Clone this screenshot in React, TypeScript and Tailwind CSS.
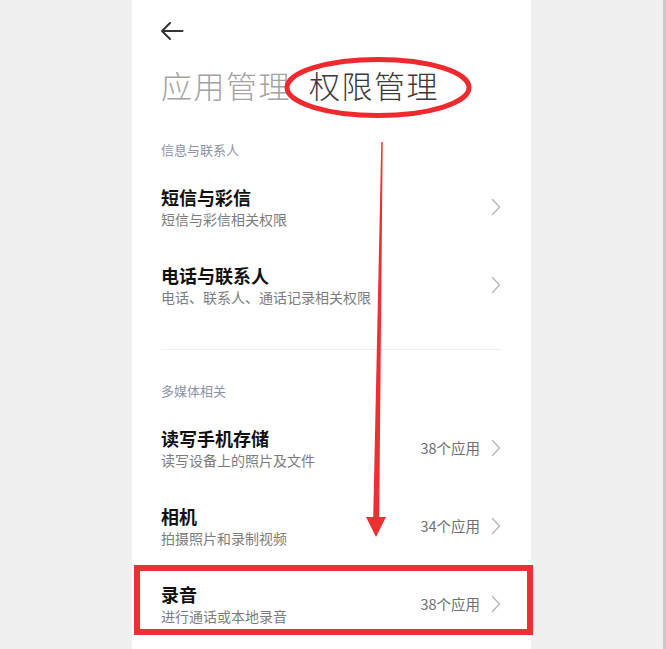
import React from 'react';

interface RowProps {
  title: string;
  desc: string;
  count?: string;
}

const Chevron = () => (
  <svg width="10" height="18" viewBox="0 0 10 18" fill="none" className="shrink-0">
    <path d="M1.5 1.5L8.5 9L1.5 16.5" stroke="#b8b8b8" strokeWidth="1.4" strokeLinecap="round" strokeLinejoin="round" />
  </svg>
);

const Row = ({ title, desc, count }: RowProps) => (
  <div className="flex items-center h-[78px]">
    <div className="flex-1 flex flex-col">
      <span className="text-[18px] leading-[24px] font-bold text-[#111]">{title}</span>
      <span className="text-[14px] leading-[20px] text-[#7d7d7d]">{desc}</span>
    </div>
    {count && <span className="text-[14.5px] text-[#6f6f6f] mr-[11px]">{count}</span>}
    <Chevron />
  </div>
);

const SectionLabel = ({ children }: { children: React.ReactNode }) => (
  <div className="text-[13px] leading-[20px] text-[#8c94a8]">{children}</div>
);

export default function App() {
  return (
    <div
      className="relative w-[666px] h-[649px] bg-[#f0f0f0] flex overflow-hidden"
      style={{ fontFamily: '"Noto Sans CJK SC", "Noto Sans", sans-serif' }}
    >
      <div className="w-[132px] shrink-0" />
      <div className="w-[399px] shrink-0 bg-white pl-[29px] pr-[30px] flex flex-col">
        <div className="mt-[19px] h-[24px] flex items-center">
          <svg width="24" height="20" viewBox="0 0 24 20" fill="none" className="-ml-[1px]">
            <path d="M22.5 10H2M10 2L2 10L10 18" stroke="#333" strokeWidth="2" strokeLinecap="round" strokeLinejoin="round" />
          </svg>
        </div>
        <div className="mt-[22px] h-[40px] flex items-center text-[31px] leading-[40px] tracking-[1.5px]">
          <span className="text-[#a3a3a3] font-light">应用管理</span>
          <span className="text-[#3a3a3a] font-light ml-[18px]">权限管理</span>
        </div>
        <div className="mt-[35px]">
          <SectionLabel>信息与联系人</SectionLabel>
        </div>
        <div className="mt-[8px]">
          <Row title="短信与彩信" desc="短信与彩信相关权限" />
          <Row title="电话与联系人" desc="电话、联系人、通话记录相关权限" />
        </div>
        <div className="mt-[25px] h-px bg-[#efefef]" />
        <div className="mt-[31px]">
          <SectionLabel>多媒体相关</SectionLabel>
        </div>
        <div className="mt-[8px]">
          <Row title="读写手机存储" desc="读写设备上的照片及文件" count="38个应用" />
          <Row title="相机" desc="拍摄照片和录制视频" count="34个应用" />
          <Row title="录音" desc="进行通话或本地录音" count="38个应用" />
        </div>
      </div>
      <div className="flex-1 border-r-[3px] border-[#c9c9c9]" />

      {/* red annotations drawn over the screenshot */}
      <svg className="absolute inset-0 pointer-events-none" width="666" height="649" viewBox="0 0 666 649">
        <ellipse cx="378" cy="87.5" rx="91" ry="28" fill="none" stroke="#ee2a2f" strokeWidth="5" />
        <polygon points="381.3,142 382.7,142 379.2,518 373.2,518" fill="#ee2f33" />
        <polygon points="366,517 386,517 376,537" fill="#ee2f33" />
        <rect x="137" y="568" width="393" height="64" fill="none" stroke="#ee2f33" strokeWidth="6" />
      </svg>
    </div>
  );
}
